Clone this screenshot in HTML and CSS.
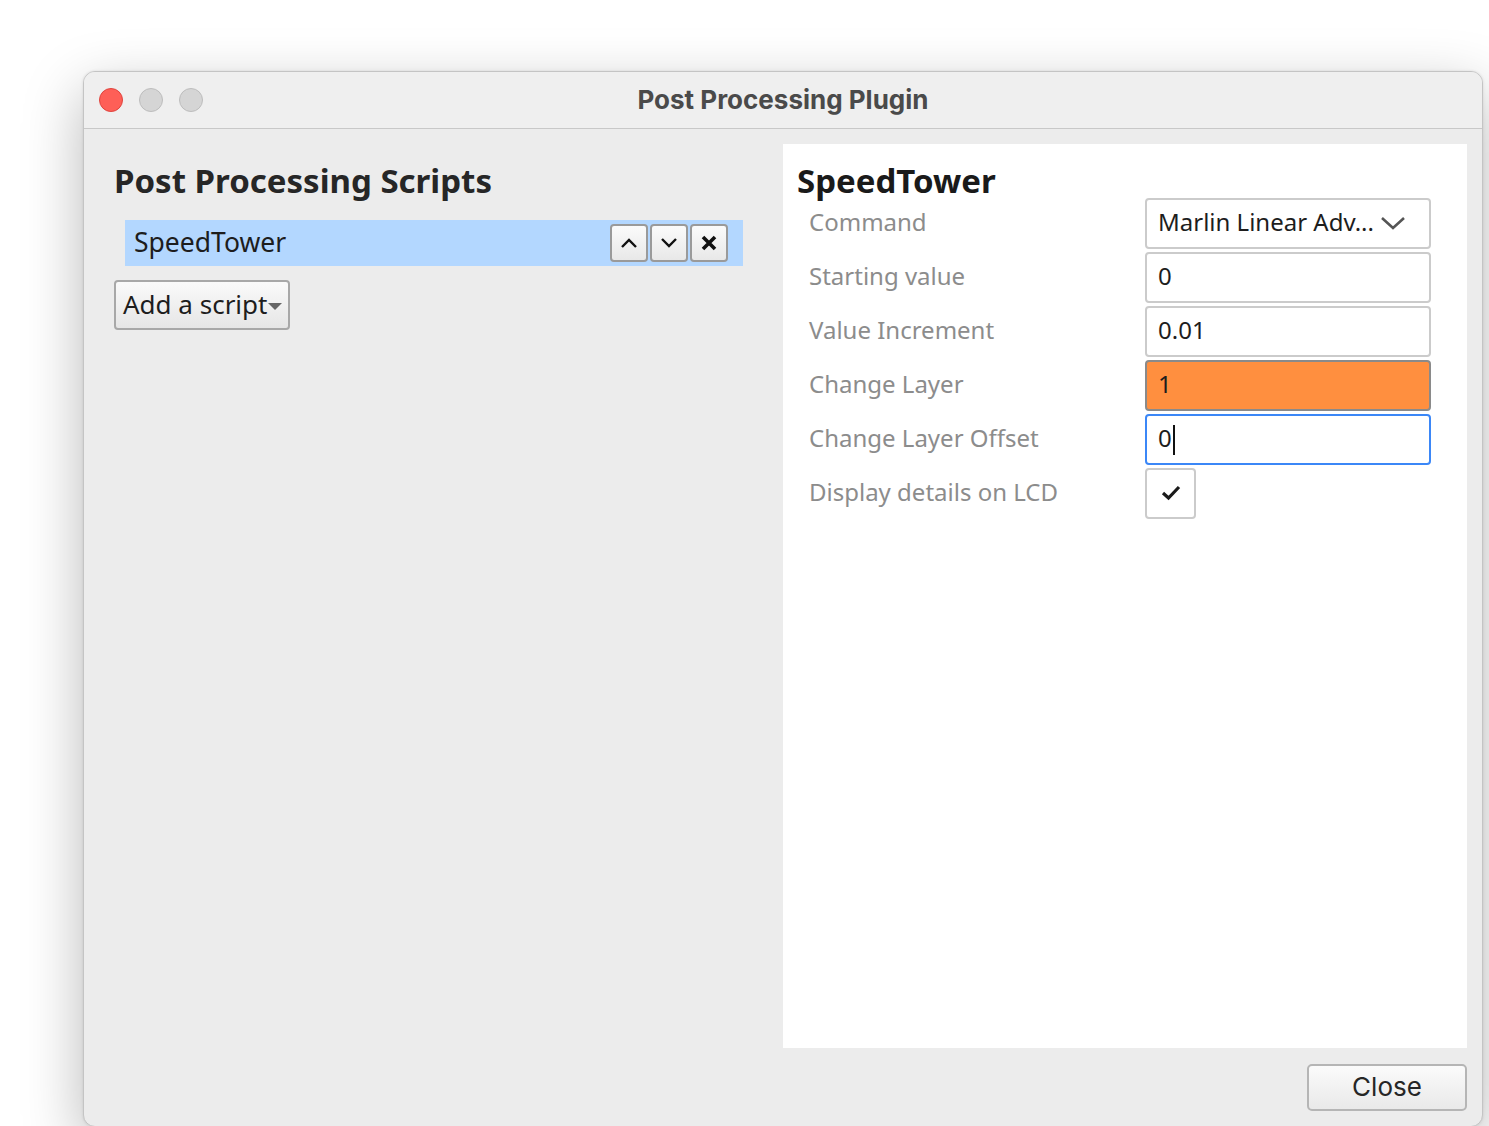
FILE: index.html
```html
<!DOCTYPE html>
<html>
<head>
<meta charset="utf-8">
<link rel="stylesheet" href="styles.css">
</head>
<body>
<div class="window">
  <div class="titlebar">
    <div class="lights">
      <span class="light red"></span>
      <span class="light"></span>
      <span class="light"></span>
    </div>
    <div class="title">Post Processing Plugin</div>
  </div>
  <div class="main">
    <div class="left">
      <h1 class="heading">Post Processing Scripts</h1>
      <div class="script-item">
        <span class="script-name">SpeedTower</span>
        <div class="item-buttons">
          <button class="tool-btn"><svg width="18" height="12" viewBox="0 0 18 12"><polyline points="2,10 9,3 16,10" fill="none" stroke="#111" stroke-width="2.4"/></svg></button>
          <button class="tool-btn"><svg width="18" height="12" viewBox="0 0 18 12"><polyline points="2,2 9,9 16,2" fill="none" stroke="#111" stroke-width="2.4"/></svg></button>
          <button class="tool-btn"><svg width="16" height="16" viewBox="0 0 16 16"><path d="M2 2 L14 14 M14 2 L2 14" stroke="#111" stroke-width="3.6"/></svg></button>
        </div>
      </div>
      <button class="add-btn">Add a script<span class="tri"></span></button>
    </div>
    <div class="right">
      <h1 class="heading">SpeedTower</h1>
      <div class="form">
        <div class="row">
          <span class="label">Command</span>
          <div class="field combo"><span>Marlin Linear Adv...</span><svg width="28" height="16" viewBox="0 0 28 16"><polyline points="3,3 14,13 25,3" fill="none" stroke="#555" stroke-width="2.6"/></svg></div>
        </div>
        <div class="row">
          <span class="label">Starting value</span>
          <div class="field">0</div>
        </div>
        <div class="row">
          <span class="label">Value Increment</span>
          <div class="field">0.01</div>
        </div>
        <div class="row">
          <span class="label">Change Layer</span>
          <div class="field error">1</div>
        </div>
        <div class="row">
          <span class="label">Change Layer Offset</span>
          <div class="field focus">0<span class="caret"></span></div>
        </div>
        <div class="row">
          <span class="label">Display details on LCD</span>
          <div class="check"><svg width="22" height="18" viewBox="0 0 22 18"><polyline points="3,9 8.5,14 19,3" fill="none" stroke="#1a1a1a" stroke-width="3.2"/></svg></div>
        </div>
      </div>
    </div>
  </div>
  <div class="footer">
    <button class="close-btn">Close</button>
  </div>
</div>
</body>
</html>
```
FILE: styles.css
```css
html, body {
  margin: 0;
  padding: 0;
  background: #ffffff;
  overflow: hidden;
  width: 1489px;
  height: 1126px;
}

.window {
  margin-left: 83px;
  margin-top: 71px;
  width: 1400px;
  height: 1056px;
  box-sizing: border-box;
  border: 1px solid #c4c4c4;
  border-radius: 12px;
  background: #ececec;
  box-shadow: 0 20px 60px rgba(0, 0, 0, 0.28), 0 0 3px rgba(0, 0, 0, 0.1);
  display: flex;
  flex-direction: column;
  overflow: hidden;
}

.titlebar {
  height: 56px;
  flex: none;
  background: #efefef;
  border-bottom: 1px solid #c8c8c8;
  display: flex;
  align-items: center;
  position: relative;
}

.lights {
  display: flex;
  gap: 16px;
  padding-left: 15px;
}

.light {
  width: 24px;
  height: 24px;
  border-radius: 50%;
  box-sizing: border-box;
  background: #d5d5d5;
  border: 1px solid #bdbdbd;
}

.light.red {
  background: #fe5f57;
  border-color: #e0443e;
}

.title {
  position: absolute;
  left: 0;
  right: 0;
  top: 0;
  bottom: 0;
  display: flex;
  align-items: center;
  justify-content: center;
  font-family: Inter, "Liberation Sans", sans-serif;
  font-weight: 700;
  font-size: 26px;
  color: #4a4a4a;
  padding-bottom: 2px;
}

.main {
  flex: 1;
  display: grid;
  grid-template-columns: 699px 1fr;
  padding: 15px 15px 0 0;
  min-height: 0;
  font-family: "Noto Sans", "Open Sans", sans-serif;
}

.left {
  padding-left: 30px;
}

.heading {
  margin: 0;
  font-family: "Noto Sans", "Open Sans", sans-serif;
  font-weight: 700;
  font-size: 33px;
  line-height: 44px;
  color: #222;
  padding-top: 15px;
}

.left .heading {
  color: #262626;
}

.script-item {
  margin-top: 17px;
  margin-left: 11px;
  width: 618px;
  height: 46px;
  background: #b3d7ff;
  display: flex;
  align-items: center;
  justify-content: space-between;
  box-sizing: border-box;
  padding-left: 9px;
  padding-right: 15px;
}

.script-name {
  font-size: 26.5px;
  color: #1d1d1d;
  padding-bottom: 2px;
}

.item-buttons {
  display: flex;
  gap: 2px;
}

.tool-btn {
  width: 38px;
  height: 38px;
  padding: 0;
  margin: 0;
  box-sizing: border-box;
  border: 2px solid #9a9a9a;
  border-radius: 4px;
  background: linear-gradient(#fbfbfb, #e8e8e8);
  display: flex;
  align-items: center;
  justify-content: center;
}

.add-btn {
  margin-top: 14px;
  height: 50px;
  box-sizing: border-box;
  border: 2px solid #a8a8a8;
  border-radius: 4px;
  background: linear-gradient(#fafafa, #e6e6e6);
  font-family: "Noto Sans", "Open Sans", sans-serif;
  font-size: 26px;
  color: #1d1d1d;
  padding: 0 6px 2px 7px;
  display: flex;
  align-items: center;
}

.tri {
  display: inline-block;
  width: 0;
  height: 0;
  border-left: 7px solid transparent;
  border-right: 7px solid transparent;
  border-top: 7px solid #666;
  margin-left: 1px;
  margin-top: 4px;
}

.right {
  background: #ffffff;
  padding-left: 14px;
}

.right .heading {
  color: #1a1a1a;
}

.form {
  margin-top: -5px;
  display: flex;
  flex-direction: column;
  gap: 4px;
}

.row {
  display: flex;
  align-items: center;
  height: 50px;
}

.label {
  width: 336px;
  padding-left: 12px;
  font-size: 24px;
  color: #8c8c8c;
  margin-top: -4px;
}

.field {
  width: 286px;
  height: 51px;
  box-sizing: border-box;
  border: 2px solid #cbcbcb;
  border-radius: 4px;
  background: #fff;
  font-size: 24px;
  color: #1d1d1d;
  display: flex;
  align-items: center;
  padding-left: 11px;
  padding-bottom: 3px;
}

.field.combo {
  justify-content: space-between;
  padding-right: 22px;
}

.field.combo svg {
  margin-top: 3px;
}

.field.error {
  background: #ff8f3f;
  border-color: #8a8a8a;
}

.field.focus {
  border-color: #3b87f7;
}

.caret {
  display: inline-block;
  width: 2px;
  height: 30px;
  background: #111;
  margin-left: 1px;
  margin-top: 4px;
}

.check {
  width: 51px;
  height: 51px;
  box-sizing: border-box;
  border: 2px solid #cbcbcb;
  border-radius: 4px;
  display: flex;
  align-items: center;
  justify-content: center;
}

.footer {
  flex: none;
  height: 78px;
  display: flex;
  justify-content: flex-end;
  align-items: flex-start;
  padding-right: 15px;
  padding-top: 16px;
  box-sizing: border-box;
}

.close-btn {
  width: 160px;
  height: 47px;
  box-sizing: border-box;
  border: 2px solid #b5b5b5;
  border-radius: 5px;
  background: linear-gradient(#fbfbfb, #e9e9e9);
  font-family: Inter, "Liberation Sans", sans-serif;
  font-size: 26px;
  color: #262626;
  padding: 0 0 2px 0;
}
```
